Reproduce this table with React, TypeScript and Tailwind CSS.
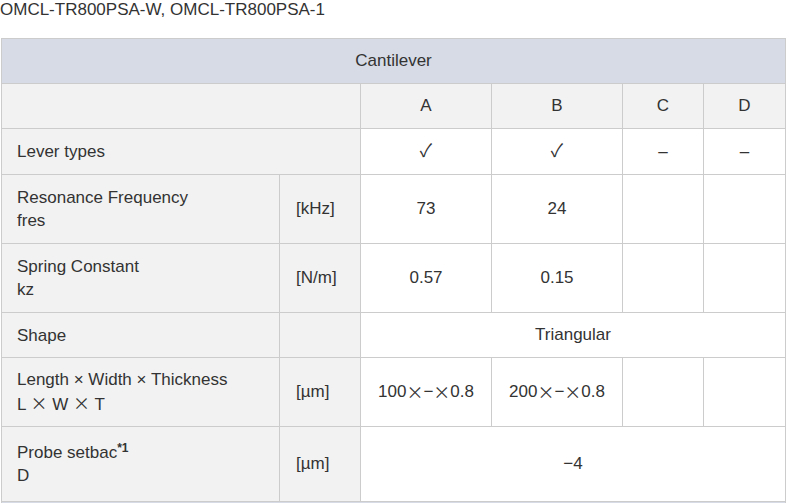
import { ReactNode } from 'react';

const font = { fontFamily: '"Liberation Sans", "Noto Sans CJK JP", sans-serif' };
const cjk = { fontFamily: '"Noto Sans CJK JP", sans-serif' };

function Cell({ children, className = 'bg-white' }: { children?: ReactNode; className?: string }) {
  return <div className={`flex items-center ${className}`}>{children}</div>;
}

function Label({ title, sub, sup, span = false }: { title: ReactNode; sub?: ReactNode; sup?: string; span?: boolean }) {
  return (
    <Cell className={`bg-[#f2f2f2] pl-[15px] ${span ? 'col-span-2' : ''}`}>
      <div className="leading-[23px]">
        <div>
          {title}
          {sup && <sup className="text-[12px] font-bold">{sup}</sup>}
        </div>
        {sub && <div>{sub}</div>}
      </div>
    </Cell>
  );
}

function Unit({ children }: { children?: ReactNode }) {
  return <Cell className="bg-[#f2f2f2] pl-[16px]">{children}</Cell>;
}

function Val({ children, className = 'bg-white' }: { children?: ReactNode; className?: string }) {
  return <Cell className={`justify-center ${className}`}>{children}</Cell>;
}

const X = () => <span style={cjk}>×</span>;

export default function App() {
  return (
    <div className="w-[789px] h-[503px] overflow-hidden bg-white text-[17px] text-[#333]" style={font}>
      <div className="h-[20px] leading-[20px]">OMCL-TR800PSA-W, OMCL-TR800PSA-1</div>

      <div className="mt-[18px] ml-[1px] w-[785px] grid gap-px p-px bg-[#cccccc] grid-cols-[277px_80px_130px_130px_80px_81px] grid-rows-[44px_44px_45px_68px_68px_44px_68px_74px_40px]">
        {/* Header */}
        <Val className="col-span-6 bg-[#d6dbe6]">Cantilever</Val>

        {/* Lever letters */}
        <Cell className="col-span-2 bg-[#f2f2f2]" />
        <Val className="bg-[#f2f2f2]">A</Val>
        <Val className="bg-[#f2f2f2]">B</Val>
        <Val className="bg-[#f2f2f2]">C</Val>
        <Val className="bg-[#f2f2f2]">D</Val>

        {/* Lever types */}
        <Label title="Lever types" span />
        <Val className="bg-white text-[18px]">✓</Val>
        <Val className="bg-white text-[18px]">✓</Val>
        <Val>–</Val>
        <Val>–</Val>

        {/* Resonance frequency */}
        <Label title="Resonance Frequency" sub="fres" />
        <Unit>[kHz]</Unit>
        <Val>73</Val>
        <Val>24</Val>
        <Val />
        <Val />

        {/* Spring constant */}
        <Label title="Spring Constant" sub="kz" />
        <Unit>[N/m]</Unit>
        <Val>0.57</Val>
        <Val>0.15</Val>
        <Val />
        <Val />

        {/* Shape */}
        <Label title="Shape" />
        <Unit />
        <Val className="col-span-4 bg-white">Triangular</Val>

        {/* Dimensions */}
        <Label
          title="Length × Width × Thickness"
          sub={<>L <X /> W <X /> T</>}
        />
        <Unit>[µm]</Unit>
        <Val>100<X />−<X />0.8</Val>
        <Val>200<X />−<X />0.8</Val>
        <Val />
        <Val />

        {/* Probe setback */}
        <Label title="Probe setbac" sup="*1" sub="D" />
        <Unit>[µm]</Unit>
        <Val className="col-span-4 bg-white">−4</Val>

        {/* next section header, cut off */}
        <Val className="col-span-6 bg-[#d6dbe6]" />
      </div>
    </div>
  );
}
